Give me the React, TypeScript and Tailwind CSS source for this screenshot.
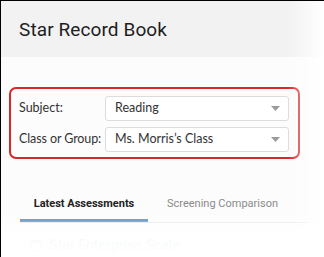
import React from "react";

function Caret() {
  return (
    <svg width="9" height="5" viewBox="0 0 9 5" className="shrink-0">
      <path d="M0 0 L9 0 L4.5 5 Z" fill="#9a9a9a" />
    </svg>
  );
}

function Select({ value }: { value: string }) {
  return (
    <div className="flex h-[25px] w-[184px] shrink-0 items-center justify-between rounded-[3px] border border-[#dcdcdc] bg-white pl-[9px] pr-[8px]">
      <span className="whitespace-nowrap text-[12.5px] text-[#333]">{value}</span>
      <Caret />
    </div>
  );
}

export default function App() {
  return (
    <div
      className="relative h-[257px] w-[324px] overflow-hidden border-l border-t border-black bg-[#fcfcfc]"
      style={{ fontFamily: "Roboto, 'Liberation Sans', sans-serif" }}
    >
      <div className="flex h-[56px] items-center bg-[#f2f2f2] pl-[18px] pt-[2px]">
        <h1 className="text-[19px] font-normal tracking-[0.1px] text-[#1e1e1e]">Star Record Book</h1>
      </div>

      <div className="pl-[8px] pt-[30px]">
        <div
          className="flex w-[291px] flex-col gap-[6px] rounded-[7px] border-2 border-[#d9262b] pb-[5px] pl-[8px] pr-[9px] pt-[7px]"
          style={{ fontFamily: "Lato, 'Open Sans', sans-serif" }}
        >
          <div className="flex items-center justify-between">
            <span className="whitespace-nowrap text-[12.5px] text-[#333]">Subject:</span>
            <Select value="Reading" />
          </div>
          <div className="flex items-center justify-between">
            <span className="whitespace-nowrap text-[12.5px] tracking-[-0.1px] text-[#333]">Class or Group:</span>
            <Select value="Ms. Morris’s Class" />
          </div>
        </div>

        <div className="ml-[11px] mt-[32px] flex w-[290px] border-b border-[#dedede]">
          <div className="-mb-px flex h-[31px] w-[128px] items-start justify-center border-b-[3px] border-[#1b6db8] pt-[5px]">
            <span className="whitespace-nowrap text-[11px] font-bold text-[#222]">Latest Assessments</span>
          </div>
          <div className="flex h-[31px] items-start pl-[19px] pt-[5px]">
            <span className="whitespace-nowrap text-[11px] text-[#8a8a8a]">Screening Comparison</span>
          </div>
        </div>

        <div className="ml-[20px] mt-[12px] flex items-center gap-[6px]">
          <svg width="14" height="14" viewBox="0 0 14 14">
            <rect x="1.5" y="3" width="11" height="9" rx="1.5" fill="none" stroke="#5a6f8a" strokeWidth="1.4" />
            <path d="M4.5 3 V1.5 H9.5 V3" fill="none" stroke="#5a6f8a" strokeWidth="1.4" />
          </svg>
          <span className="whitespace-nowrap text-[14px] font-medium text-[#3d6ea8]">Star Enterprise Scale</span>
        </div>
      </div>

      <div className="pointer-events-none absolute right-0 top-0 h-full w-[36px] bg-linear-to-r from-transparent to-white" />
      <div className="pointer-events-none absolute bottom-0 left-0 h-[46px] w-full bg-linear-to-b from-white/0 via-white/95 to-white" />
    </div>
  );
}
